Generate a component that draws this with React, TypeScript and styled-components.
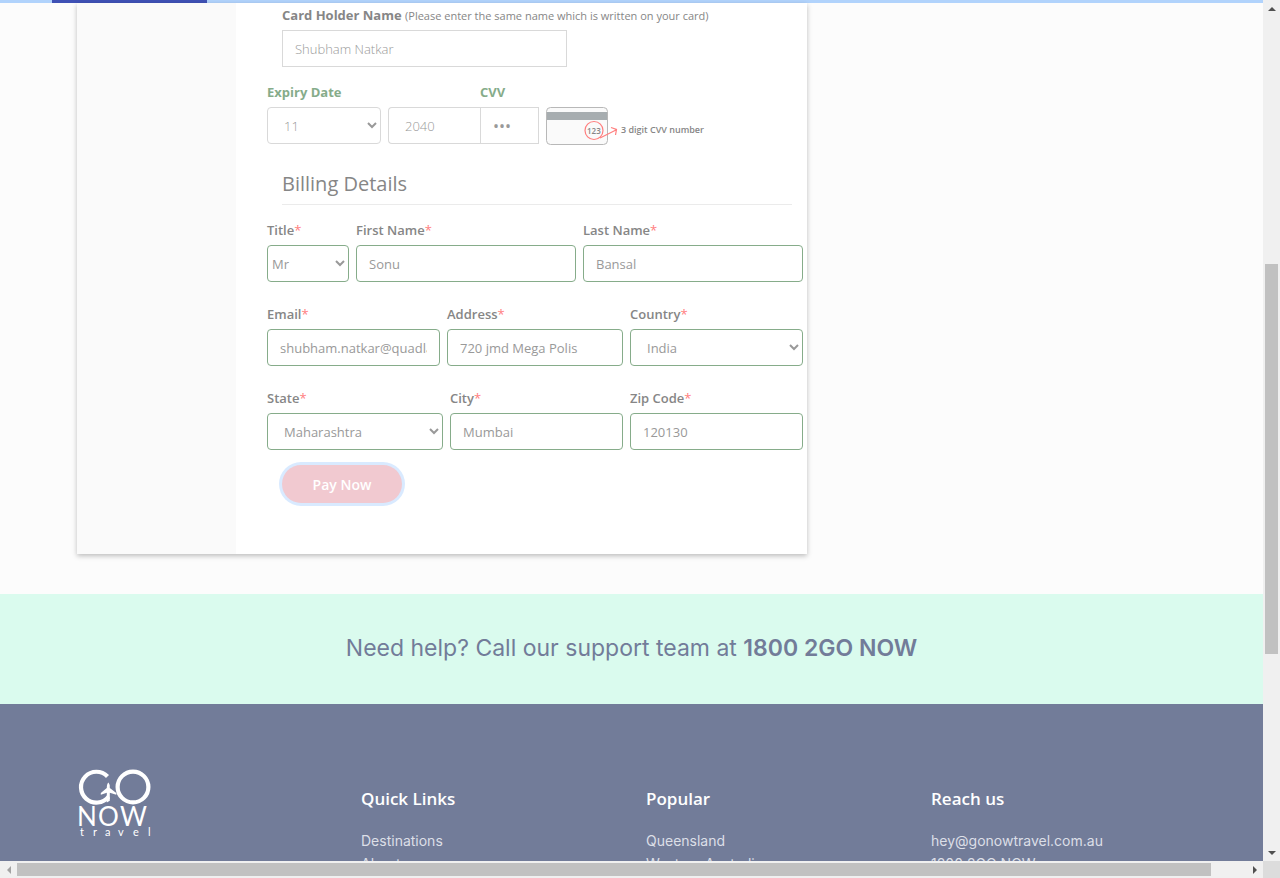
import React from "react";
import styled, { createGlobalStyle } from "styled-components";

const ui = `"Open Sans", "Noto Sans", sans-serif`;

const GlobalStyle = createGlobalStyle`
  *, *::before, *::after { box-sizing: border-box; }
  html, body { margin: 0; overflow: hidden; }
  body { font-family: ${ui}; font-size: 13px; line-height: 20px; color: #868686; background: #fcfcfc; }
`;

const Frame = styled.div`
  display: grid;
  grid-template-columns: minmax(0, 1fr) 17px;
  grid-template-rows: minmax(0, 1fr) 17px;
  height: 100vh;
`;

const Page = styled.div`
  overflow: hidden;
`;

const Progress = styled.div`
  height: 3px;
  padding-left: 52px;
  background: #b1d3fc;
`;

const ProgressBar = styled.div`
  width: 155px;
  height: 3px;
  background: #3f51b5;
`;

const Main = styled.main`
  display: grid;
  grid-template-columns: 730fr 380fr;
  padding: 0 76px 40px 77px;
`;

const Panel = styled.section`
  display: grid;
  grid-template-columns: 159px minmax(0, 1fr);
  background: #fff;
  box-shadow: 0 2px 5px rgba(0, 0, 0, 0.25);
`;

const Tabs = styled.div`
  background: #fafafa;
`;

const Form = styled.form`
  padding: 2px 4px 51px 31px;
`;

const Inset = styled.div`
  padding: 0 11px 0 15px;
`;

const HolderLabel = styled.label`
  display: block;
  margin-bottom: 5px;
  font-weight: 700;
  small { font-size: 11px; font-weight: 400; line-height: 16px; }
`;

const Control = styled.input<{ $tone?: "card" | "billing"; $square?: boolean }>`
  display: block;
  width: 100%;
  height: 37px;
  padding: 0 12px;
  border: 1px solid ${(p) => (p.$tone === "card" ? "#d9d9d9" : "#86ac8a")};
  border-radius: ${(p) => (p.$square ? "0" : "4px")};
  background: #fff;
  color: #999;
  font-family: ${ui};
  font-size: 13px;
  font-weight: ${(p) => (p.$tone === "card" ? 300 : 400)};
  outline: none;
`;

const HolderInput = styled(Control)`
  width: 285px;
`;

const CvvInput = styled(Control)`
  font-size: 16px;
  font-weight: 400;
`;

const Select = styled(Control)<{ $tight?: boolean }>`
  padding: 0 0 0 ${(p) => (p.$tight ? "0" : "12px")};
`;

const CardGrid = styled.div`
  display: grid;
  grid-template-columns: 114px 7px 92px 59px 7px auto;
  row-gap: 5px;
  justify-content: start;
  margin-top: 15px;
`;

const GreenLabel = styled.label`
  grid-column: span 3;
  color: #86ac8a;
  font-weight: 700;
`;

const YearInput = styled(Control)`
  padding-left: 16px;
  border-right: 0;
  border-radius: 4px 0 0 4px;
`;

const CvvHint = styled.div`
  display: flex;
  align-items: center;
  height: 37px;
  font-size: 9px;
  font-weight: 600;
  line-height: 12px;
  svg { display: block; margin-right: 3px; }
  span { padding-top: 8px; }
`;

const Title = styled.h2`
  margin: 25px 0 15px;
  padding-bottom: 5px;
  border-bottom: 1px solid #ebebeb;
  font-size: 20px;
  font-weight: 500;
  line-height: 30px;
`;

const FieldRow = styled.div<{ $cols: string }>`
  display: grid;
  grid-template-columns: ${(p) => p.$cols};
  gap: 7px;
  margin-bottom: 22px;
  &:last-of-type { margin-bottom: 15px; }
`;

const Field = styled.div`
  min-width: 0;
`;

const FieldLabel = styled.label`
  display: block;
  margin-bottom: 5px;
  font-weight: 600;
  span { color: #ff7e7e; font-weight: 400; }
`;

const PayButton = styled.button`
  display: block;
  width: 120px;
  height: 38px;
  margin-left: 15px;
  border: 0;
  border-radius: 19px;
  background: #f1c9d0;
  box-shadow: 0 0 0 3px #d9eaff;
  color: #fff;
  font-family: ${ui};
  font-size: 14px;
  font-weight: 600;
`;

const Help = styled.section`
  padding: 38px 0 40px;
  background: #dafbee;
  color: #727c99;
  font-family: Inter, sans-serif;
  font-size: 23px;
  line-height: 32px;
  text-align: center;
  strong { font-weight: 600; }
`;

const Footer = styled.footer`
  display: grid;
  grid-template-columns: repeat(4, minmax(0, 1fr));
  padding: 62px 62px 60px 61px;
  background: #727c99;
`;

const FooterCol = styled.div`
  padding: 21px 15px 0;
`;

const LogoLink = styled.a`
  display: block;
  padding: 0 15px;
  svg { display: block; }
`;

const FooterTitle = styled.h3`
  margin: 0 0 18px;
  color: #fff;
  font-size: 17px;
  font-weight: 600;
  line-height: 24px;
`;

const FooterLink = styled.a`
  display: block;
  color: #dcdfe7;
  font-family: Inter, sans-serif;
  font-size: 14px;
  line-height: 23px;
  text-decoration: none;
`;

const Track = styled.div<{ $vertical?: boolean }>`
  display: grid;
  ${(p) =>
    p.$vertical
      ? "grid-template-rows: 17px 247fr 390fr 190fr 17px; padding: 0 2px 0 2px;"
      : "grid-template-columns: 17px 1194fr 35fr 17px; padding: 2px 0;"}
  background: #f0f0f0;
  svg { place-self: center; }
`;

const Thumb = styled.div`
  background: #c1c1c1;
`;

const Corner = styled.div`
  background: #dcdcdc;
`;

function Arrow({ d, faint }: { d: string; faint?: boolean }) {
  return (
    <svg width="8" height="8" viewBox="0 0 8 8" aria-hidden="true">
      <path d={d} fill={faint ? "#a3a3a3" : "#505050"} />
    </svg>
  );
}

function CardBack() {
  return (
    <svg width="72" height="38" viewBox="0 0 72 38" aria-hidden="true">
      <rect x="0.5" y="0.5" width="61" height="37" rx="4" fill="#fafafa" stroke="#b8b8b8" />
      <rect x="1" y="5" width="60" height="8" fill="#a7adb0" />
      <text x="41" y="27" fontFamily="Open Sans, sans-serif" fontSize="8" fontWeight="600" fill="#868686">123</text>
      <circle cx="48" cy="23.5" r="9" fill="none" stroke="#ff7e7e" strokeWidth="1.2" />
      <path d="M54 31 L70 23 M65 20.500 L70.500 22.500 L69.500 28" fill="none" stroke="#ff7e7e" strokeWidth="1.2" />
    </svg>
  );
}

function Logo() {
  return (
    <svg width="76" height="72" viewBox="0 0 76 72" role="img" aria-label="Go Now Travel">
      <g fill="none" stroke="#fff" strokeWidth="4.2">
        <path d="M31.500 10.500 A15.400 15.400 0 1 0 32.500 30.700" />
        <circle cx="57" cy="21" r="15.400" />
      </g>
      <path d="M32.500 16.500 q1.300 1.300 1.300 5.500 l6.500 5 v1.800 l-6.500 -2 v8 l-3 1.600 v-9.600 l-6 2 v-1.800 l6 -5 q0 -4.200 1.700 -5.500z" fill="#fff" />
      <text x="1 22 44" y="60" fontFamily="Lato, sans-serif" fontSize="26" fill="#fff">NOW</text>
      <text x="4 17 29 42 57 72" y="70" fontFamily="Lato, sans-serif" fontSize="11" fill="#fff">travel</text>
    </svg>
  );
}

type FieldSpec = { id: string; label: string; value: string; select?: boolean; tight?: boolean };

const rows: { cols: string; fields: FieldSpec[] }[] = [
  {
    cols: "82fr 220fr 220fr",
    fields: [
      { id: "title", label: "Title", value: "Mr", select: true, tight: true },
      { id: "first", label: "First Name", value: "Sonu" },
      { id: "last", label: "Last Name", value: "Bansal" },
    ],
  },
  {
    cols: "173fr 176fr 173fr",
    fields: [
      { id: "email", label: "Email", value: "shubham.natkar@quadlabs.com" },
      { id: "address", label: "Address", value: "720 jmd Mega Polis" },
      { id: "country", label: "Country", value: "India", select: true },
    ],
  },
  {
    cols: "176fr 173fr 173fr",
    fields: [
      { id: "state", label: "State", value: "Maharashtra", select: true },
      { id: "city", label: "City", value: "Mumbai" },
      { id: "zip", label: "Zip Code", value: "120130" },
    ],
  },
];

const footerCols = [
  { title: "Quick Links", links: ["Destinations", "About us"] },
  { title: "Popular", links: ["Queensland", "Western Australia"] },
  { title: "Reach us", links: ["hey@gonowtravel.com.au", "1800 2GO NOW"] },
];

export default function App() {
  return (
    <>
      <GlobalStyle />
      <Frame>
        <Page>
          <Progress>
            <ProgressBar />
          </Progress>
          <Main>
            <Panel>
              <Tabs />
              <Form onSubmit={(e) => e.preventDefault()}>
                <Inset>
                  <HolderLabel htmlFor="holder">
                    Card Holder Name <small>(Please enter the same name which is written on your card)</small>
                  </HolderLabel>
                  <HolderInput id="holder" $tone="card" $square defaultValue="Shubham Natkar" />
                </Inset>
                <CardGrid>
                  <GreenLabel htmlFor="month">Expiry Date</GreenLabel>
                  <GreenLabel htmlFor="cvv">CVV</GreenLabel>
                  <Select as="select" id="month" $tone="card" defaultValue="11">
                    <option>11</option>
                  </Select>
                  <span />
                  <YearInput aria-label="Expiry year" $tone="card" defaultValue="2040" />
                  <CvvInput id="cvv" type="password" $tone="card" $square defaultValue="123" />
                  <span />
                  <CvvHint>
                    <CardBack />
                    <span>3 digit CVV number</span>
                  </CvvHint>
                </CardGrid>
                <Inset>
                  <Title>Billing Details</Title>
                </Inset>
                {rows.map((row) => (
                  <FieldRow key={row.fields[0].id} $cols={row.cols}>
                    {row.fields.map((f) => (
                      <Field key={f.id}>
                        <FieldLabel htmlFor={f.id}>
                          {f.label}
                          <span>*</span>
                        </FieldLabel>
                        {f.select ? (
                          <Select as="select" id={f.id} $tight={f.tight} defaultValue={f.value}>
                            <option>{f.value}</option>
                          </Select>
                        ) : (
                          <Control id={f.id} defaultValue={f.value} />
                        )}
                      </Field>
                    ))}
                  </FieldRow>
                ))}
                <PayButton type="submit">Pay Now</PayButton>
              </Form>
            </Panel>
          </Main>
          <Help>
            Need help? Call our support team at <strong>1800 2GO NOW</strong>
          </Help>
          <Footer>
            <LogoLink href="#">
              <Logo />
            </LogoLink>
            {footerCols.map((c) => (
              <FooterCol key={c.title}>
                <FooterTitle>{c.title}</FooterTitle>
                {c.links.map((l) => (
                  <FooterLink key={l} href="#">{l}</FooterLink>
                ))}
              </FooterCol>
            ))}
          </Footer>
        </Page>
        <Track $vertical>
          <Arrow d="M4 2 L8 6 H0z" />
          <span />
          <Thumb />
          <span />
          <Arrow d="M4 6 L0 2 H8z" />
        </Track>
        <Track>
          <Arrow d="M2 4 L6 0 V8z" faint />
          <Thumb />
          <span />
          <Arrow d="M6 4 L2 0 V8z" />
        </Track>
        <Corner />
      </Frame>
    </>
  );
}
